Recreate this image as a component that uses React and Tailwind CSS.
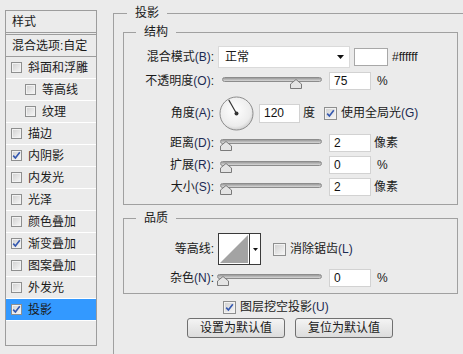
const sideItems = [
  { label: "斜面和浮雕", checked: false, indent: false },
  { label: "等高线", checked: false, indent: true },
  { label: "纹理", checked: false, indent: true },
  { label: "描边", checked: false, indent: false },
  { label: "内阴影", checked: true, indent: false },
  { label: "内发光", checked: false, indent: false },
  { label: "光泽", checked: false, indent: false },
  { label: "颜色叠加", checked: false, indent: false },
  { label: "渐变叠加", checked: true, indent: false },
  { label: "图案叠加", checked: false, indent: false },
  { label: "外发光", checked: false, indent: false },
  { label: "投影", checked: true, indent: false, active: true },
];

function Check({ checked, small }) {
  return (
    <span
      className={`${small ? "w-[11px] h-[11px]" : "w-[13px] h-[13px]"} shrink-0 border border-[#8e8f8f] bg-linear-to-br from-[#cfcfcf] to-[#f8f8f8] shadow-[inset_0_0_0_1px_#f2f2f2] flex items-center justify-center`}
    >
      {checked && (
        <svg width="9" height="9" viewBox="0 0 9 9">
          <path d="M1.2 4.6 L3.4 7 L7.8 1.2" fill="none" stroke="#3458b0" strokeWidth="1.6" />
        </svg>
      )}
    </span>
  );
}

function Slider({ width, pos }) {
  return (
    <div className="relative h-[18px] shrink-0" style={{ width }}>
      <div className="absolute left-0 right-0 top-[5px] h-[5px] rounded-full border border-[#8c8c8c] bg-linear-to-b from-[#9a9a9a] to-[#d8d8d8]" />
      <svg className="absolute top-[7px]" style={{ left: pos }} width="12" height="10" viewBox="0 0 12 10">
        <path d="M6 0.5 L11.5 5 L11.5 9.5 L0.5 9.5 L0.5 5 Z" fill="#e4e4e4" stroke="#7a7a7a" />
      </svg>
    </div>
  );
}

function Field({ value, width = "w-[42px]", height = "h-[18px]" }) {
  return (
    <div className={`${width} ${height} shrink-0 bg-white border border-[#d2d2d2] pl-[4px] flex items-center text-[12px] text-[#111]`}>
      {value}
    </div>
  );
}

function Label({ text, hot }) {
  return (
    <div className="w-[90px] shrink-0 text-right leading-[14px]">
      {text}
      {hot && <span className="text-[#1c2a52]">({hot})</span>}:
    </div>
  );
}

export default function App() {
  return (
    <div className="w-[463px] h-[354px] overflow-hidden bg-[#ebebeb] flex text-[12px] text-[#1a1a1a] font-['Liberation_Sans','Noto_Sans_CJK_SC',sans-serif]">
      {/* styles list */}
      <div className="w-[113px] shrink-0 pl-[5px] pt-[10px]">
        <div className="w-[92px] h-[336px] border border-[#9c9c9c]">
          <div className="h-[22px] border-b border-[#9c9c9c] pl-[6px] flex items-center">样式</div>
          <div className="mt-[1px] h-[23px] border-y border-[#9c9c9c] pl-[6px] flex items-center">混合选项:自定</div>
          {sideItems.map((it) => (
            <div
              key={it.label}
              className={`h-[22px] border-b border-white flex items-center gap-[6px] ${it.indent ? "pl-[19px]" : "pl-[5px]"} ${it.active ? "bg-[#3399ff] border-[#3399ff]" : ""}`}
            >
              <Check checked={it.checked} small />
              <span className="leading-[14px]">{it.label}</span>
            </div>
          ))}
        </div>
      </div>

      {/* settings */}
      <fieldset className="mt-[6px] w-[360px] h-[360px] shrink-0 border-l border-t border-[#a0a0a0] pl-[9px]">
        <legend className="ml-[4px] px-[8px] leading-[14px]">投影</legend>

        <fieldset className="mt-[5px] w-[335px] border border-[#a0a0a0] pb-[8px]">
          <legend className="ml-[12px] px-[8px] leading-[14px]">结构</legend>

          <div className="mt-[7px] h-[22px] flex items-center">
            <Label text="混合模式" hot="B" />
            <div className="ml-[4px] w-[132px] h-[22px] bg-white border border-[#dadada] pl-[6px] pr-[5px] flex items-center justify-between">
              <span>正常</span>
              <svg width="7" height="4" viewBox="0 0 7 4">
                <path d="M0 0 H7 L3.5 4 Z" fill="#111" />
              </svg>
            </div>
            <div className="ml-[4px] w-[34px] h-[18px] bg-white border border-[#a8a8a8]" />
            <span className="ml-[4px]">#ffffff</span>
          </div>

          <div className="mt-[4px] h-[18px] flex items-center">
            <Label text="不透明度" hot="O" />
            <div className="ml-[8px]">
              <Slider width="100px" pos="68px" />
            </div>
            <div className="ml-[7px]">
              <Field value="75" />
            </div>
            <span className="ml-[6px]">%</span>
          </div>

          <div className="mt-[6px] h-[34px] flex items-center">
            <Label text="角度" hot="A" />
            <svg className="ml-[5px] shrink-0" width="35" height="35" viewBox="0 0 35 35">
              <defs>
                <radialGradient id="dial" cx="45%" cy="40%" r="65%">
                  <stop offset="0" stopColor="#ffffff" />
                  <stop offset="0.75" stopColor="#ececec" />
                  <stop offset="1" stopColor="#c4c4c4" />
                </radialGradient>
              </defs>
              <circle cx="17.5" cy="17.5" r="16.5" fill="url(#dial)" stroke="#8c8c8c" />
              <line x1="17.5" y1="17.5" x2="9.8" y2="4" stroke="#333" strokeWidth="1.2" />
              <circle cx="17.5" cy="17.5" r="2" fill="#333" />
            </svg>
            <div className="ml-[5px]">
              <Field value="120" width="w-[41px]" height="h-[19px]" />
            </div>
            <span className="ml-[3px]">度</span>
            <div className="ml-[9px] flex items-center gap-[4px]">
              <Check checked />
              <span>
                使用全局光<span className="text-[#1c2a52]">(G)</span>
              </span>
            </div>
          </div>

          {[
            ["距离", "D", "2", "像素"],
            ["扩展", "R", "0", "%"],
            ["大小", "S", "2", "像素"],
          ].map(([t, h, v, u]) => (
            <div key={t} className="mt-[4px] h-[18px] flex items-center">
              <Label text={t} hot={h} />
              <div className="ml-[6px]">
                <Slider width="102px" pos="0px" />
              </div>
              <div className="ml-[7px]">
                <Field value={v} />
              </div>
              <span className={u === "%" ? "ml-[6px]" : "ml-[3px]"}>{u}</span>
            </div>
          ))}
        </fieldset>

        <fieldset className="mt-[6px] w-[335px] border border-[#a0a0a0] pb-[6px]">
          <legend className="ml-[12px] px-[8px] leading-[14px]">品质</legend>

          <div className="mt-[8px] h-[32px] flex items-center">
            <Label text="等高线" />
            <div className="ml-[4px] w-[43px] h-[32px] border border-[#3a3a3a] bg-white flex">
              <svg width="30" height="30" viewBox="0 0 30 30" className="shrink-0">
                <rect x="0" y="0" width="30" height="30" fill="#fff" />
                <path d="M1 29 L29 1 L29 29 Z" fill="#a3a3a3" />
              </svg>
              <div className="flex-1 border-l border-[#3a3a3a] flex items-center justify-center">
                <svg width="5" height="3" viewBox="0 0 5 3">
                  <path d="M0 0 H5 L2.5 3 Z" fill="#111" />
                </svg>
              </div>
            </div>
            <div className="ml-[12px] flex items-center gap-[4px]">
              <Check />
              <span>
                消除锯齿<span className="text-[#1c2a52]">(L)</span>
              </span>
            </div>
          </div>

          <div className="mt-[4px] h-[18px] flex items-center">
            <Label text="杂色" hot="N" />
            <div className="ml-[3px]">
              <Slider width="105px" pos="0px" />
            </div>
            <div className="ml-[7px]">
              <Field value="0" />
            </div>
            <span className="ml-[6px]">%</span>
          </div>
        </fieldset>

        <div className="mt-[5px] h-[16px] pl-[100px] flex items-center gap-[4px]">
          <Check checked />
          <span>
            图层挖空投影<span className="text-[#1c2a52]">(U)</span>
          </span>
        </div>

        <div className="mt-[3px] pl-[64px] flex gap-[10px]">
          <button className="w-[98px] h-[20px] rounded-[3px] border border-[#707070] bg-linear-to-b from-[#f4f4f4] to-[#dcdcdc] text-[12px] leading-[14px]">
            设置为默认值
          </button>
          <button className="w-[98px] h-[20px] rounded-[3px] border border-[#707070] bg-linear-to-b from-[#f4f4f4] to-[#dcdcdc] text-[12px] leading-[14px]">
            复位为默认值
          </button>
        </div>
      </fieldset>
    </div>
  );
}
